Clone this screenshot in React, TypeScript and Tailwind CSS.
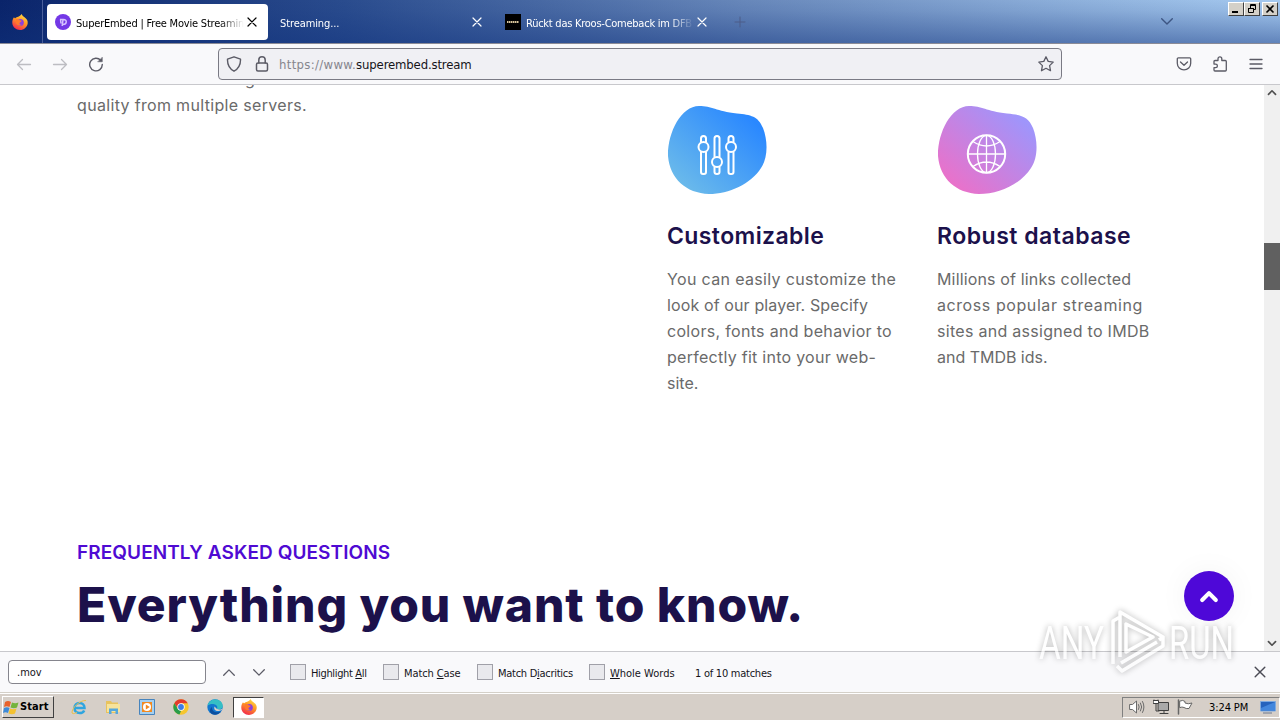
import type { ReactNode } from "react";

const stroke = {
  fill: "none",
  stroke: "currentColor",
  strokeLinecap: "round",
  strokeLinejoin: "round",
} as const;

const Close = ({ className }: { className: string }) => (
  <svg viewBox="0 0 10 10" className={className} {...stroke} strokeWidth="1.2">
    <path d="M1 1l8 8M9 1l-8 8" />
  </svg>
);

const Chevron = ({ up = false, className }: { up?: boolean; className: string }) => (
  <svg viewBox="0 0 12 7" className={`overflow-visible ${className}`} {...stroke}>
    <path d={up ? "M.7 6.2L6 .9l5.3 5.3" : "M.7 .8L6 6.1 11.3 .8"} />
  </svg>
);

const Firefox = () => (
  <svg viewBox="0 0 16 16" className="h-4 w-4 shrink-0">
    <defs>
      <linearGradient id="fox" x1=".8" y1="0" x2=".3" y2="1">
        <stop offset="0" stopColor="#ffe14a" />
        <stop offset=".45" stopColor="#ff9a24" />
        <stop offset="1" stopColor="#f2264f" />
      </linearGradient>
    </defs>
    <path
      d="M2 3.2c.3.5.7.9 1.200 1.100.8-1 1.900-1.500 3-1.600C7.600 2.300 8.300 1.300 9.800 0c.2 1.600 1.300 2.100 2.700 3.200C14.600 4.600 16 6.500 15.700 9.200 15.200 13 12 16 8 16S.5 13 .3 9C.2 6.700.7 4.800 2 3.200z"
      fill="url(#fox)"
    />
    <circle cx="8.300" cy="8.400" r="3.500" fill="#8a3fe0" />
    <path d="M4 5.200c1.500-.5 2.900 0 3.800 1.100l2 .4c-.5 1.200-1.700 1.300-2.200 2.200-.4.900.6 2 2.300 1.800-2.400 1.900-5.600.6-5.900-2z" fill="#ff7a2c" />
  </svg>
);

const Tab = ({ icon, title, className }: { icon?: ReactNode; title: string; className: string }) => (
  <div className={`flex h-9 items-center rounded-[4px] pl-2 ${className}`}>
    {icon}
    <span className="flex-1 overflow-hidden pt-1 whitespace-nowrap [mask-image:linear-gradient(to_right,black_calc(100%-24px),transparent)]">
      {title}
    </span>
    <Close className="mr-[11px] ml-[3px] h-[10px] w-[10px] shrink-0" />
  </div>
);

const WindowButton = ({ children, className = "" }: { children: ReactNode; className?: string }) => (
  <button
    className={`flex h-[14px] w-4 items-center justify-center border border-t-white border-l-white border-r-[#404040] border-b-[#404040] bg-[#d4d0c8] ${className}`}
  >
    <svg viewBox="0 0 12 10" className="h-[10px] w-3" fill="none" stroke="black">
      {children}
    </svg>
  </button>
);

const TitleBar = () => (
  <div className="flex h-[43px] shrink-0 bg-[linear-gradient(to_bottom,rgba(16,50,125,0)_0%,rgba(16,50,125,0.08)_25%,rgba(16,50,125,0.46)_100%),linear-gradient(to_right,#0a246a_0%,#2a4c8e_27%,#6787ba_58%,#a6caf0_100%)] text-white">
    <div className="flex w-[43px] items-center justify-center border-r border-[#4a5f9b] pr-[3px]">
      <Firefox />
    </div>
    <div className="flex pt-1 text-[11px]">
      <Tab
        className="ml-1 w-[221px] bg-white text-black tracking-[-0.2px]"
        title="SuperEmbed | Free Movie Streamin"
        icon={
          <svg viewBox="0 0 16 16" className="mr-[5px] h-4 w-4 shrink-0">
            <circle cx="8" cy="8" r="8" fill="#7338e6" />
            <path d="M5 5.500h3.500c4 0 3.500 5-.5 5M8 5.500L7.200 12M5.500 5.500l.5 4" fill="none" stroke="#d5c1ff" strokeWidth="1.500" />
          </svg>
        }
      />
      <Tab className="ml-1 w-[221px] tracking-[-0.1px]" title="Streaming..." />
      <Tab
        className="ml-1 w-[221px] tracking-[-0.25px]"
        title="Rückt das Kroos-Comeback im DFB"
        icon={
          <svg viewBox="0 0 16 16" className="mr-[5px] h-4 w-4 shrink-0">
            <path d="M0 0h16v16H0z" />
            <path d="M2 8h12" stroke="#d8c49a" strokeWidth="2" strokeDasharray="1.500 .5" />
          </svg>
        }
      />
    </div>
    <svg viewBox="0 0 12 12" className="mt-4 ml-[16px] h-3 w-3 text-[#4c5d88]" {...stroke}>
      <path d="M6 1v10M1 6h10" />
    </svg>
    <Chevron className="mt-[18px] ml-auto h-[7px] w-3 stroke-[1.4] text-[#3d5582]" />
    <div className="ml-[55px] flex pt-[2px] pr-[2px]">
      <WindowButton>
        <path d="M2 8h6" strokeWidth="2" />
      </WindowButton>
      <WindowButton>
        <path d="M4.500 4V.500h5v5H8M4 1.500h6M2 4.500h6M2.500 4v4.500h5V4" />
      </WindowButton>
      <WindowButton className="ml-[2px]">
        <path d="M2.500 1.500l7 7M9.500 1.500l-7 7" strokeWidth="1.600" />
      </WindowButton>
    </div>
  </div>
);

const Toolbar = () => (
  <div className="flex h-[42px] shrink-0 items-center border-t border-b border-t-[#8b8b96] border-b-[#c8c8cc] bg-[#f9f9fb] text-[#5b5b66]">
    <svg viewBox="0 0 16 16" className="ml-4 h-4 w-4 text-[#bdbdc2]" {...stroke} strokeWidth="1.300">
      <path d="M14.500 8.500h-13M6.500 3.500l-5 5 5 5" />
    </svg>
    <svg viewBox="0 0 16 16" className="ml-5 h-4 w-4 text-[#bdbdc2]" {...stroke} strokeWidth="1.300">
      <path d="M1.500 8.500h13M9.500 3.500l5 5-5 5" />
    </svg>
    <svg viewBox="0 0 16 16" className="ml-5 h-4 w-4" {...stroke} strokeWidth="1.400">
      <path d="M12.800 4.500A6.300 6.300 0 1 0 14.300 8.500" />
      <path d="M14.300 1.500v4.300H10z" fill="currentColor" strokeWidth=".5" />
    </svg>
    <div className="ml-[114px] flex h-8 w-[844px] items-center rounded-[4px] border border-[#7a7a84] bg-[#f0f0f4]">
      <svg viewBox="0 0 16 16" className="ml-[7px] h-4 w-4" {...stroke} strokeWidth="1.400">
        <path d="M8 .8l6.500 2.400c.2 5-1.300 9-6.500 12C2.800 12.200 1.300 8.200 1.500 3.200z" />
      </svg>
      <svg viewBox="0 0 16 16" className="ml-3 h-4 w-4" {...stroke} strokeWidth="1.500">
        <rect x="2.500" y="7" width="11" height="8" rx="1.500" />
        <path d="M4.800 7V4a3.200 3.200 0 0 1 6.400 0v3" />
      </svg>
      <span className="ml-[9px] pt-px text-[13px] tracking-[0.33px] text-[#85858d]">
        https://www.<span className="tracking-[-0.15px] text-[#15141a]">superembed.stream</span>
      </span>
      <svg viewBox="0 0 16 16" className="mr-[7px] ml-auto h-4 w-4" {...stroke} strokeWidth="1.300">
        <path d="M8 .8l2.200 4.600 5 .7-3.600 3.500.9 5.100L8 12.300l-4.500 2.400.9-5.100L.8 6.100l5-.7z" />
      </svg>
    </div>
    <svg viewBox="0 0 16 16" className="ml-[114px] h-4 w-4" {...stroke} strokeWidth="1.300">
      <path d="M2.300 1.800h11.400a1 1 0 0 1 1 1v4.400a6.700 6.700 0 0 1-13.400 0V2.800a1 1 0 0 1 1-1zM4.500 6L8 9.300 11.500 6" />
    </svg>
    <svg viewBox="0 0 16 16" className="ml-5 h-4 w-4" {...stroke} strokeWidth="1.300">
      <path d="M2 5.500a1 1 0 0 1 1-1h3V2.700a1.900 1.900 0 0 1 3.800 0v1.800h3.500a1 1 0 0 1 1 1V14a1 1 0 0 1-1 1H3a1 1 0 0 1-1-1v-2.300h1.600a1.800 1.800 0 0 0 0-3.600H2z" />
    </svg>
    <svg viewBox="0 0 16 16" className="ml-5 h-4 w-4" {...stroke} strokeWidth="1.300">
      <path d="M2 3.500h12M2 8h12M2 12.500h12" />
    </svg>
  </div>
);

const Blob = ({ id, from, to, children }: { id: string; from: string; to: string; children: ReactNode }) => (
  <svg viewBox="0 0 100 88" className="h-[88px] w-[100px]">
    <defs>
      <linearGradient id={id} x1=".1" y1=".9" x2=".85" y2=".15">
        <stop offset="0" stopColor={from} />
        <stop offset="1" stopColor={to} />
      </linearGradient>
    </defs>
    <path
      d="M32 0C45 0 49 5 70 7.500 84 9 91 10 96 22 101 35 101 52 94 62 84 78 62 88 42 88 19 87 3 73 1 50 .5 27 14 0 32 0z"
      fill={`url(#${id})`}
    />
    <g fill="none" stroke="white" transform="translate(1 0)">{children}</g>
  </svg>
);

const Feature = ({ icon, title, children, className }: { icon: ReactNode; title: string; children: ReactNode; className: string }) => (
  <div className={`w-[270px] shrink-0 ${className}`}>
    {icon}
    <h3 className="mt-[26px] text-[23px] leading-8 font-semibold text-[#1c114b]">{title}</h3>
    <p className="mt-[14px] flex flex-col text-[16px] leading-[26px] whitespace-nowrap text-[#6a6a6a]">{children}</p>
  </div>
);

const Content = () => (
  <div className="relative flex h-[566px] shrink-0">
    <main className="flex h-full w-[1264px] flex-col overflow-hidden bg-white pl-[77px] font-[Inter,sans-serif]">
      <div className="flex h-[440px]">
        <div className="-mt-[19px] w-[590px] text-[16px] leading-[26px] text-[#6a6a6a]">
          <p className="pl-[168px]">g</p>
          <p className="tracking-[0.33px]">quality from multiple servers.</p>
        </div>
        <div className="flex pt-[21px]">
          <Feature
            className="[&_h3]:tracking-[0.4px]"
            title="Customizable"
            icon={
              <Blob id="blue" from="#6cbbea" to="#2a88ff">
                <g strokeWidth="2">
                  <path d="M33 36v-3.500a2.500 2.500 0 0 1 5 0V36M33 46v20a2 2 0 0 0 2 2h1a2 2 0 0 0 2-2V46" />
                  <circle cx="35.500" cy="41" r="5" />
                  <path d="M46.500 51V32.500a2.500 2.500 0 0 1 5 0V51M46.500 61v5a2.500 2 0 0 0 5 0v-5" />
                  <circle cx="49" cy="56" r="5" />
                  <path d="M60.500 36v-3.500a2.500 2.500 0 0 1 5 0V36M60.500 46v20a2 2 0 0 0 2 2h1a2 2 0 0 0 2-2V46" />
                  <circle cx="63" cy="41" r="5" />
                </g>
              </Blob>
            }
          >
            <span className="tracking-[0.34px]">You can easily customize the</span>
            <span className="tracking-[0.12px]">look of our player. Specify</span>
            <span className="tracking-[0.31px]">colors, fonts and behavior to</span>
            <span className="tracking-[0.27px]">perfectly fit into your web-</span>
            <span>site.</span>
          </Feature>
          <Feature
            className="[&_h3]:tracking-[0.5px]"
            title="Robust database"
            icon={
              <Blob id="pink" from="#ec70c8" to="#9f95fb">
                <circle cx="48.500" cy="48" r="18.700" strokeWidth="2" />
                <ellipse cx="48.500" cy="48" rx="9" ry="18.700" strokeWidth="1.300" />
                <path d="M48.500 29v38M29.500 48h38M35 35.500q13.500 9 27 0M35 60.500q13.500-9 27 0" strokeWidth="1.300" />
              </Blob>
            }
          >
            <span className="tracking-[0.15px]">Millions of links collected</span>
            <span className="tracking-[0.58px]">across popular streaming</span>
            <span className="tracking-[0.29px]">sites and assigned to IMDB</span>
            <span className="tracking-[-0.02px]">and TMDB ids.</span>
          </Feature>
        </div>
      </div>
      <h5 className="mt-[13px] text-[19px] leading-[30px] font-semibold tracking-[0.08px] text-[#4f0ad3]">
        FREQUENTLY ASKED QUESTIONS
      </h5>
      <h2 className="mt-[6px] text-[48px] leading-[62px] font-extrabold tracking-[0.9px] whitespace-nowrap text-[#1c114b]">
        Everything you want to know.
      </h2>
    </main>
    <div className="flex w-4 flex-col items-center bg-[#f0f0f0] text-[#505050]">
      <Chevron up className="mt-[5px] h-[5px] w-2 stroke-[2.500]" />
      <div className="mt-[148px] h-[47px] w-4 bg-[#606060]" />
      <Chevron className="mt-auto mb-[5px] h-[5px] w-2 stroke-[2.500]" />
    </div>
    <button className="absolute top-[486px] left-[1184px] flex h-[50px] w-[50px] items-center justify-center rounded-full bg-[#4e08d8] text-white shadow-[0_0_30px_rgba(0,0,0,0.05)]">
      <Chevron up className="h-[9px] w-4 stroke-[3.2]" />
    </button>
  </div>
);

const FindOption = ({ className, children }: { className: string; children: ReactNode }) => (
  <label className={`flex shrink-0 items-center gap-[5px] whitespace-nowrap ${className}`}>
    <span className="h-4 w-4 border border-[#a0a0a8] bg-[#e9e9ed]" />
    <span className="pt-1">{children}</span>
  </label>
);

const FindBar = () => (
  <div className="flex h-[42px] shrink-0 items-center border-t border-b border-t-[#c8c8cc] border-b-[#d4d0c8] bg-[#f9f9fb] text-[11px] text-[#15141a]">
    <div className="ml-2 flex h-6 w-[198px] items-center rounded-[4px] border border-[#85858d] bg-white pt-[3px] pl-2">.mov</div>
    <Chevron up className="ml-[17px] h-[7px] w-3 stroke-[1.3] text-[#5b5b66]" />
    <Chevron className="mr-[25px] ml-[18px] h-[7px] w-3 stroke-[1.3] text-[#5b5b66]" />
    <FindOption className="w-[93px] tracking-[-0.35px]">Highlight <u>A</u>ll</FindOption>
    <FindOption className="w-[94px] tracking-[-0.1px]">Match <u>C</u>ase</FindOption>
    <FindOption className="w-[112px] tracking-[-0.28px]">Match D<u>i</u>acritics</FindOption>
    <FindOption className="w-[106px]"><u>W</u>hole Words</FindOption>
    <span className="pt-1 tracking-[-0.25px]">1 of 10 matches</span>
    <Close className="mr-[14px] ml-auto h-3 w-3 text-[#4b4b55]" />
  </div>
);

const Taskbar = () => (
  <div className="flex h-[27px] shrink-0 items-center border-t border-white bg-[#d6cfc8] text-[11px] text-black">
    <button className="ml-[2px] flex h-[22px] w-[52px] items-center border border-t-white border-l-white border-r-[#404040] border-b-[#404040] font-bold">
      <svg viewBox="0 0 16 16" className="h-4 w-4 shrink-0">
        <path d="M2 3q3-2 6 0L6.500 8q-3-1.500-5.500 0z" fill="#e8622c" />
        <path d="M9 3.500q3 1.500 6.500 0L14 8.500q-3 1.500-6.500 0z" fill="#73b43c" />
        <path d="M1 9q3-1.500 5.500 0L5 14q-2.500-1.500-5 0z" fill="#3d8ad8" />
        <path d="M7 9.500q3 1.500 6.500 0L12 14.500q-3 1.500-6.500 0z" fill="#f3c131" />
      </svg>
      <span className="ml-px tracking-[0.1px]">Start</span>
    </button>
    <div className="ml-[17px] flex items-center gap-[18px]">
      <svg viewBox="0 0 16 16" className="h-4 w-4" fill="none">
        <path d="M4 9h9.500c0-3-2-5-5-5S3.500 6 3.500 9s2 5 5 5c2.300 0 4-1 4.700-2.600" stroke="#2fa5df" strokeWidth="2.500" />
        <path d="M1 14C.5 9 9 1 15 1.500M1 14c1.500 1.500 4 0 5-1" stroke="#e9c04a" />
      </svg>
      <svg viewBox="0 0 16 16" className="h-4 w-4">
        <path d="M1 2h5l1 1.500h6V14H1z" fill="#e8c35e" />
        <path d="M2 5h13v8H2z" fill="#f7e39b" />
        <path d="M4 15V9.500h9V15h-2.500v-3h-4v3z" fill="#56a8dc" />
      </svg>
      <svg viewBox="0 0 16 16" className="h-4 w-4">
        <path d="M.5.500h15v15H.5z" fill="#a5d0f0" stroke="#4784bd" />
        <path d="M3 3h10v10H3z" fill="#f28a20" />
        <circle cx="8" cy="8" r="4" fill="white" />
        <path d="M6.800 5.500l4 2.500-4 2.500z" fill="#f28a20" />
      </svg>
      <svg viewBox="0 0 16 16" className="h-4 w-4">
        <circle cx="8" cy="8" r="7.700" fill="#f6c62e" />
        <path d="M1.300 4.200a7.700 7.700 0 0 1 13.400 0H8L5 9.500z" fill="#e33b2e" />
        <path d="M1.300 4.200L5 10l3 2-1.500 3.600A7.700 7.700 0 0 1 1.300 4.200z" fill="#2a9d4a" />
        <circle cx="8" cy="8" r="3.700" fill="white" />
        <circle cx="8" cy="8" r="2.900" fill="#3c7de6" />
      </svg>
      <svg viewBox="0 0 16 16" className="h-4 w-4">
        <circle cx="8" cy="8" r="7.700" fill="#1277cf" />
        <path d="M.5 6.500C2 1.500 6-.2 10 .6c4 .9 6 4 5.700 7-.4 2.500-3 3.200-6 2.200 1.300-1.500.5-4-2.500-4.600C4.500 4.700 2 5.500.5 6.500z" fill="#35bfc5" />
        <path d="M5 8c-.5 4 3 6.500 9 4.500-2 3-6 4-9 2.500S2.500 10 5 8z" fill="#0c4f9e" />
        <path d="M7.500 7.500c-1 3 1 5 4.500 4.500l3-1v-1c-2 1-4 .5-5.300-.2z" fill="#d6cfc8" />
      </svg>
    </div>
    <div className="ml-[10px] flex h-[21px] w-[31px] items-center justify-center border border-t-[#404040] border-l-[#404040] border-r-white border-b-white bg-white">
      <Firefox />
    </div>
    <div className="ml-auto flex h-[21px] w-[158px] items-center border border-t-[#808080] border-l-[#808080] border-r-white border-b-white">
      <svg viewBox="0 0 16 16" className="ml-[6px] h-4 w-4 text-[#6a6a6a]" {...stroke}>
        <path d="M1 5.500h2.500L7.500 2v12l-4-3.500H1z" fill="white" />
        <path d="M9.500 5.500q1.500 2.500 0 5M11.500 4q2.500 4 0 8M13.500 2.500q3 5.500 0 11" />
      </svg>
      <svg viewBox="0 0 16 16" className="ml-2 h-4 w-4 text-[#3f3f3f]" {...stroke}>
        <path d="M5.500 3.500h10v8h-10z" fill="#a9a9a9" />
        <path d="M1 1v3h4V1M3 4v8h3M7 14.500h8M11 12v2" />
        <path d="M.5 1.500h5v3h-5z" fill="white" />
      </svg>
      <svg viewBox="0 0 16 16" className="ml-2 h-4 w-4 text-[#666]" {...stroke}>
        <path d="M1.500 1v14" strokeWidth="1.500" />
        <path d="M3 2q3-1.500 5 .5V4q3 1.500 7 0l-3 5.500q-3 .5-5-1-2-1-4 0z" fill="white" />
      </svg>
      <span className="ml-4 pt-[2px] tracking-[-0.1px] whitespace-nowrap">3:24 PM</span>
      <svg viewBox="0 0 16 14" className="mr-[3px] ml-auto h-[14px] w-4 shrink-0">
        <path d="M.5 1.500h15v9.500H.5z" fill="#2563bd" stroke="#7eaadf" />
        <path d="M1 8L15 2v8.500H1z" fill="#4387dd" />
        <path d="M3 13h9" stroke="#6b7890" />
      </svg>
    </div>
  </div>
);

const Watermark = () => (
  <svg
    viewBox="0 0 210 70"
    className="pointer-events-none absolute top-[606px] left-[1032px] h-[70px] w-[210px] opacity-60 drop-shadow-[0_0_3px_rgba(0,0,0,0.5)]"
    fill="none"
    stroke="white"
  >
    <g fill="white" stroke="none" fontFamily="Roboto, sans-serif" fontSize="47">
      <text x="7" y="53" textLength="65" lengthAdjust="spacingAndGlyphs">ANY</text>
      <text x="137" y="53" textLength="65" lengthAdjust="spacingAndGlyphs">RUN</text>
    </g>
    <path d="M81 58V15l7-4M88 51V6l43 25-4 3M94 18v28l27-15zM85 60l5 5 41-25V31M89 57l36-21" strokeWidth="3.500" strokeLinejoin="round" />
  </svg>
);

const App = () => {
  return (
    <div className="relative flex h-[720px] w-[1280px] flex-col overflow-hidden bg-white font-['DejaVu_Sans_Condensed','DejaVu_Sans',sans-serif]">
      <TitleBar />
      <Toolbar />
      <Content />
      <FindBar />
      <Taskbar />
      <Watermark />
    </div>
  );
};

export default App;
